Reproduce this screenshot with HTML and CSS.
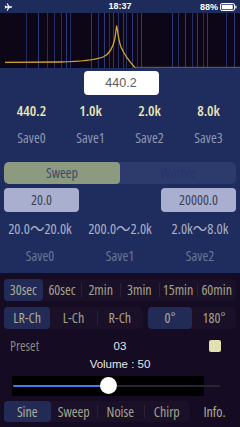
FILE: index.html
```html
<!DOCTYPE html>
<html>
<head>
<meta charset="utf-8">
<link rel="stylesheet" href="styles.css">
</head>
<body>
<div class="app">
  <div class="status">
    <svg class="plane" width="9" height="8" viewBox="0 0 10 10"><path d="M9.6 5 C9.6 4.5 9.1 4.2 8.5 4.2 L6.2 4.2 L3.8 0.3 L2.7 0.3 L4.2 4.2 L2 4.2 L1.2 3 L0.3 3 L0.8 5 L0.3 7 L1.2 7 L2 5.8 L4.2 5.8 L2.7 9.7 L3.8 9.7 L6.2 5.8 L8.5 5.8 C9.1 5.8 9.6 5.5 9.6 5 Z" fill="#fff"/></svg>
    <span class="clock">18:37</span>
    <span class="batt"><span class="pct">88%</span><svg width="17" height="8" viewBox="0 0 17 8"><rect x="0.5" y="0.5" width="14" height="7" rx="1.6" fill="none" stroke="#fff" stroke-width="1"/><rect x="1.8" y="1.8" width="11" height="4.4" rx="0.6" fill="#fff"/><rect x="15.3" y="2.6" width="1.2" height="2.8" rx="0.5" fill="#fff"/></svg></span>
  </div>
  <div class="graph">
    <svg width="240" height="55" viewBox="0 13 240 55">
      <g stroke="#2b3a7c" stroke-width="1">
        <line x1="26.5" y1="13" x2="26.5" y2="68" opacity="0.7"/>
        <line x1="38.5" y1="13" x2="38.5" y2="68"/>
        <line x1="47.5" y1="13" x2="47.5" y2="68" opacity="0.8"/>
        <line x1="54.5" y1="13" x2="54.5" y2="68" opacity="0.8"/>
        <line x1="61.5" y1="13" x2="61.5" y2="68" opacity="0.8"/>
        <line x1="66.5" y1="13" x2="66.5" y2="68"/>
        <line x1="70.5" y1="13" x2="70.5" y2="68" opacity="0.8"/>
        <line x1="91.5" y1="13" x2="91.5" y2="68"/>
        <line x1="98.5" y1="13" x2="98.5" y2="68" opacity="0.8"/>
        <line x1="104.5" y1="13" x2="104.5" y2="68"/>
        <line x1="109.5" y1="13" x2="109.5" y2="68" opacity="0.8"/>
        <line x1="113.5" y1="13" x2="113.5" y2="68"/>
        <line x1="118.5" y1="13" x2="118.5" y2="68" opacity="0.8"/>
        <line x1="123.5" y1="13" x2="123.5" y2="68"/>
        <line x1="126.5" y1="13" x2="126.5" y2="68" opacity="0.8"/>
        <line x1="132.5" y1="13" x2="132.5" y2="68"/>
        <line x1="137.5" y1="13" x2="137.5" y2="68" opacity="0.8"/>
        <line x1="141.5" y1="13" x2="141.5" y2="68"/>
        <line x1="172.5" y1="13" x2="172.5" y2="68"/>
        <line x1="178.5" y1="13" x2="178.5" y2="68" opacity="0.8"/>
        <line x1="185.5" y1="13" x2="185.5" y2="68"/>
        <line x1="192.5" y1="13" x2="192.5" y2="68" opacity="0.8"/>
        <line x1="197.5" y1="13" x2="197.5" y2="68"/>
        <line x1="203.5" y1="13" x2="203.5" y2="68" opacity="0.8"/>
        <line x1="207.5" y1="13" x2="207.5" y2="68"/>
        <line x1="226.5" y1="13" x2="226.5" y2="68" opacity="0.8"/>
        <line x1="234.5" y1="13" x2="234.5" y2="68"/>
      </g>
      <line x1="135" y1="67.4" x2="240" y2="67.4" stroke="#5e5447" stroke-width="1.2"/>
      <path d="M5 62.3 L60 62 C80 61.5 95 60 103 57 C109 54.5 113 48 115 38 L116.6 25.5 L117.6 31 C118.5 38 119.5 43 121 47 C124 54 128 60 135 67.6" fill="none" stroke="#d0a52c" stroke-width="1.3"/>
    </svg>
  </div>
  <div class="panel">
    <div class="freq-row"><div class="freq-box">440.2</div></div>
    <div class="cols4 values"><span>440.2</span><span>1.0k</span><span>2.0k</span><span>8.0k</span></div>
    <div class="cols4 saves"><span>Save0</span><span>Save1</span><span>Save2</span><span>Save3</span></div>
    <div class="mode-seg"><div class="mode on">Sweep</div><div class="mode">Warble</div></div>
    <div class="inputs"><div class="inbox">20.0</div><div class="inbox">20000.0</div></div>
    <div class="cols3 ranges"><span>20.0〜20.0k</span><span>200.0〜2.0k</span><span>2.0k〜8.0k</span></div>
    <div class="cols3 saves dim"><span>Save0</span><span>Save1</span><span>Save2</span></div>
  </div>
  <div class="dark">
    <div class="seg time-seg">
      <div class="it on">30sec</div><div class="it">60sec</div><div class="it sep">2min</div><div class="it sep">3min</div><div class="it sep">15min</div><div class="it sep">60min</div>
    </div>
    <div class="ctrl-row">
      <div class="seg ch-seg"><div class="it on">LR-Ch</div><div class="it">L-Ch</div><div class="it sep">R-Ch</div></div>
      <div class="seg ph-seg"><div class="it on">0°</div><div class="it">180°</div></div>
    </div>
    <div class="preset-row">
      <span class="preset">Preset</span>
      <span class="num">03</span>
      <span class="sq"></span>
    </div>
    <div class="volume">Volume : 50</div>
    <div class="slider">
      <div class="slider-bg"></div>
      <div class="track"><div class="fill"></div></div>
      <div class="thumb"></div>
    </div>
    <div class="bottom-row">
      <div class="seg wave-seg"><div class="it on">Sine</div><div class="it">Sweep</div><div class="it sep">Noise</div><div class="it sep">Chirp</div></div>
      <div class="info">Info.</div>
    </div>
  </div>
</div>
</body>
</html>
```

FILE: styles.css
```css
html, body {
  margin: 0;
  padding: 0;
  background: #150b22;
}
.app {
  width: 240px;
  height: 427px;
  overflow: hidden;
  font-family: "Open Sans", "Liberation Sans", "Noto Sans CJK JP", sans-serif;
  font-stretch: condensed;
}
.status {
  height: 13px;
  background: #1e2c5c;
  display: flex;
  align-items: center;
  justify-content: space-between;
  padding: 0 3px 0 4px;
  color: #fff;
  font-family: "Liberation Sans", sans-serif;
  font-stretch: normal;
  font-weight: bold;
  font-size: 9px;
  position: relative;
}
.plane { display: block; }
.clock {
  position: absolute;
  left: 0;
  right: 0;
  text-align: center;
  line-height: 13px;
}
.batt { display: flex; align-items: center; gap: 2px; }
.batt svg { display: block; }
.graph {
  height: 55px;
  background: #0d0616;
}
.graph svg { display: block; }
.panel {
  height: 205px;
  background: #1f2d5e;
  box-sizing: border-box;
  padding-top: 3px;
  display: flex;
  flex-direction: column;
}
.freq-row { display: flex; justify-content: center; }
.freq-box {
  width: 75px;
  height: 24px;
  margin-left: 2px;
  background: #fff;
  border-radius: 4px;
  color: #5a5a5a;
  font-family: "Liberation Sans", sans-serif;
  font-stretch: normal;
  font-size: 12.5px;
  line-height: 24px;
  text-align: center;
}
.cols4, .cols3 {
  display: grid;
  padding: 0 2px;
  height: 16px;
  line-height: 16px;
  text-align: center;
}
.cols4 { grid-template-columns: repeat(4, 1fr); }
.cols3 { grid-template-columns: repeat(3, 1fr); padding: 0; }
.values {
  margin-top: 8px;
  color: #ebe6b4;
  font-size: 14.5px;
  font-weight: 600;
}
.saves {
  margin-top: 11px;
  color: #8e96b0;
  font-size: 14px;
}
.saves.dim { color: #6a7496; }
.mode-seg {
  margin: 16px 4px 0;
  height: 22px;
  display: flex;
  background: #2c3b6c;
  border-radius: 5px;
  overflow: hidden;
}
.mode {
  flex: 1;
  text-align: center;
  line-height: 22px;
  font-size: 14px;
  color: #26346e;
}
.mode.on {
  background: #8c9a80;
  color: #3c4a6c;
  border-radius: 4px;
}
.inputs {
  margin: 4px 4px 0;
  height: 24px;
  display: flex;
  justify-content: space-between;
}
.inbox {
  width: 75px;
  height: 24px;
  background: #a9afcf;
  border-radius: 4px;
  color: #3c4058;
  font-size: 14px;
  line-height: 24px;
  text-align: center;
}
.ranges {
  margin-top: 9px;
  color: #aab1c8;
  font-size: 14.5px;
}
.dark {
  display: flex;
  flex-direction: column;
}
.seg {
  display: flex;
  height: 22px;
  background: #1a1129;
  border-radius: 5px;
}
.it {
  flex: 1;
  text-align: center;
  line-height: 22px;
  font-size: 14px;
  color: #a6a18c;
  position: relative;
  border-radius: 4px;
  white-space: nowrap;
}
.it.on {
  background: #212b56;
  color: #aeaa98;
}
.it.sep::before {
  content: "";
  position: absolute;
  left: 0;
  top: 4px;
  bottom: 4px;
  width: 1px;
  background: #2a2238;
}
.time-seg { margin: 6px 4px 0; }
.ctrl-row {
  margin: 6px 4px 0;
  display: flex;
  justify-content: space-between;
}
.ch-seg { width: 139px; }
.ph-seg { width: 89px; }
.ph-seg .it.on { margin-left: 1px; }
.preset-row {
  margin-top: 10px;
  height: 14px;
  display: flex;
  align-items: center;
  padding: 0 19px 0 10px;
  position: relative;
}
.preset {
  color: #8b8880;
  font-size: 13.5px;
}
.num {
  position: absolute;
  left: 0;
  right: 0;
  text-align: center;
  color: #e6e6e6;
  font-family: "Liberation Sans", sans-serif;
  font-stretch: normal;
  font-size: 11.5px;
}
.sq {
  margin-left: auto;
  width: 12px;
  height: 12px;
  background: #e0e0b0;
  border-radius: 2px;
}
.volume {
  margin-top: 4px;
  height: 14px;
  line-height: 14px;
  text-align: center;
  color: #e6e6e6;
  font-family: "Liberation Sans", sans-serif;
  font-stretch: normal;
  font-size: 11.5px;
}
.slider {
  margin: 5px 0 0 12px;
  width: 208px;
  height: 20px;
  position: relative;
}
.slider-bg {
  width: 192px;
  height: 20px;
  background: #000;
}
.track {
  position: absolute;
  left: 1px;
  right: 0;
  top: 9px;
  height: 2px;
  background: #2a2530;
  border-radius: 1px;
}
.fill {
  width: 95px;
  height: 2px;
  background: #3d7cf2;
  border-radius: 1px;
}
.thumb {
  position: absolute;
  left: 88px;
  top: 1px;
  width: 17px;
  height: 17px;
  border-radius: 50%;
  background: #fff;
}
.bottom-row {
  margin: 5px 4px 0;
  display: flex;
  align-items: center;
}
.wave-seg { width: 186px; height: 21px; }
.wave-seg .it { line-height: 21px; }
.info {
  flex: 1;
  text-align: center;
  color: #b0ab98;
  font-size: 14px;
  line-height: 21px;
  padding-left: 3px;
}
```
